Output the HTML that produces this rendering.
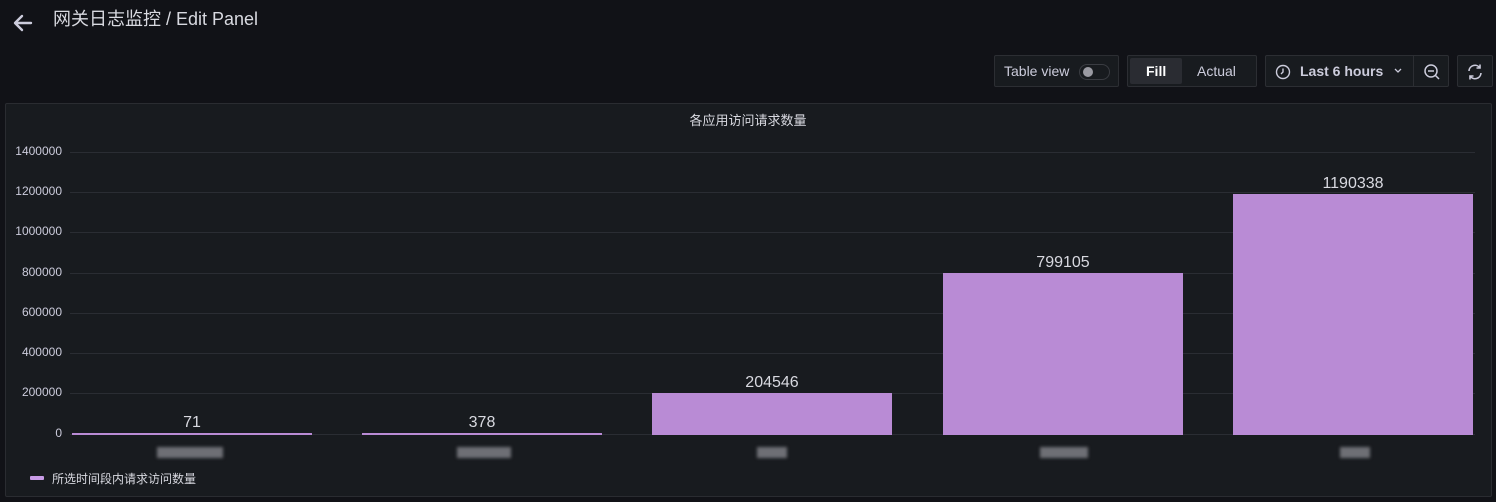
<!DOCTYPE html>
<html><head><meta charset="utf-8"><style>
*{margin:0;padding:0;box-sizing:border-box}
body{width:1496px;height:502px;background:#111217;font-family:"Liberation Sans","Noto Sans CJK SC",sans-serif;color:#ccccdc;position:relative;overflow:hidden}
.a{position:absolute}
.btn{position:absolute;border:1px solid #2c2e33;border-radius:2px;background:#181b1f;height:32px;top:55px;font-size:14px;color:#ccccdc}
.yl{position:absolute;right:1434px;font-size:12px;color:#ccccdc;text-align:right;width:60px}
.gl{position:absolute;left:70px;width:1405px;height:1px;background:#2a2d33}
.bar{position:absolute;background:#b98bd5;width:240px}
.v{position:absolute;width:240px;text-align:center;font-size:16px;color:#d8d9e0}
.blur{position:absolute;top:447px;height:11px;background:#6e6f75;filter:blur(1.5px)}
</style></head><body>
<svg class="a" style="left:12px;top:12px" width="22" height="22" viewBox="0 0 22 22"><path d="M19 11H4M10 4l-7 7 7 7" stroke="#ccccdc" stroke-width="2.4" fill="none" stroke-linecap="round" stroke-linejoin="round"/></svg>
<div class="a" style="left:53px;top:5px;font-size:18px;color:#d8d9e0">网关日志监控 / Edit Panel</div>

<div class="btn" style="left:994px;width:125px"><span class="a" style="left:9px;top:7px">Table view</span><div class="a" style="left:84px;top:8px;width:31px;height:16px;border:1px solid #3a3c42;border-radius:8px"><div class="a" style="left:3px;top:2px;width:10px;height:10px;border-radius:50%;background:#9a9aa2"></div></div></div>
<div class="btn" style="left:1127px;width:130px"><div class="a" style="left:2px;top:2px;width:52px;height:26px;background:#2a2c32;border-radius:2px"></div><span class="a" style="left:18px;top:7px;font-weight:bold;color:#fff">Fill</span><span class="a" style="left:69px;top:7px">Actual</span></div>
<div class="btn" style="left:1265px;width:184px">
<svg class="a" style="left:9px;top:8px" width="16" height="16" viewBox="0 0 16 16"><circle cx="8" cy="8" r="6.5" stroke="#ccccdc" stroke-width="1.4" fill="none"/><path d="M8 4.5V8L6 10" stroke="#ccccdc" stroke-width="1.4" fill="none"/></svg>
<span class="a" style="left:34px;top:7px;font-weight:bold">Last 6 hours</span>
<svg class="a" style="left:128px;top:12px" width="8" height="6"><path d="M1 1l3 3 3-3" stroke="#ccccdc" stroke-width="1.3" fill="none"/></svg>
<div class="a" style="left:147px;top:0;width:1px;height:30px;background:#2c2e33"></div>
<svg class="a" style="left:157px;top:7px" width="18" height="18" viewBox="0 0 18 18"><circle cx="8" cy="8" r="6" stroke="#ccccdc" stroke-width="1.5" fill="none"/><path d="M5 8h6M12.5 12.5L16 16" stroke="#ccccdc" stroke-width="1.5"/></svg>
</div>
<div class="btn" style="left:1457px;width:36px"><svg class="a" style="left:8px;top:7px" width="18" height="18" viewBox="0 0 18 18"><path d="M3 8a6 6 0 0 1 11-3M15 10a6 6 0 0 1-11 3" stroke="#ccccdc" stroke-width="1.6" fill="none"/><path d="M14 1.5V5h-3.5M4 16.5V13h3.5" stroke="#ccccdc" stroke-width="1.6" fill="none"/></svg></div>

<div class="a" style="left:5px;top:103px;width:1487px;height:394px;background:#181b1f;border:1px solid #2a2c31;border-radius:2px"></div>
<div class="a" style="left:0;width:1496px;top:110px;text-align:center;font-size:13px;color:#d8d9e0">各应用访问请求数量</div>

<div class="gl" style="top:152px"></div><div class="gl" style="top:192px"></div><div class="gl" style="top:232px"></div><div class="gl" style="top:273px"></div><div class="gl" style="top:313px"></div><div class="gl" style="top:353px"></div><div class="gl" style="top:393px"></div><div class="gl" style="top:434px"></div>
<div class="yl" style="top:144px">1400000</div><div class="yl" style="top:184px">1200000</div><div class="yl" style="top:224px">1000000</div><div class="yl" style="top:265px">800000</div><div class="yl" style="top:305px">600000</div><div class="yl" style="top:345px">400000</div><div class="yl" style="top:385px">200000</div><div class="yl" style="top:426px">0</div>

<div class="bar" style="left:72px;top:433px;height:2px"></div>
<div class="bar" style="left:362px;top:433px;height:2px"></div>
<div class="bar" style="left:652px;top:393px;height:42px"></div>
<div class="bar" style="left:943px;top:273px;height:162px"></div>
<div class="bar" style="left:1233px;top:194px;height:241px"></div>
<div class="v" style="left:72px;top:414px">71</div>
<div class="v" style="left:362px;top:414px">378</div>
<div class="v" style="left:652px;top:374px">204546</div>
<div class="v" style="left:943px;top:254px">799105</div>
<div class="v" style="left:1233px;top:175px">1190338</div>

<div class="blur" style="left:157px;width:66px"></div>
<div class="blur" style="left:457px;width:54px"></div>
<div class="blur" style="left:757px;width:30px"></div>
<div class="blur" style="left:1040px;width:48px"></div>
<div class="blur" style="left:1340px;width:30px"></div>

<div class="a" style="left:30px;top:476px;width:14px;height:4px;background:#c89be6;border-radius:1px"></div>
<div class="a" style="left:52px;top:470px;font-size:12px;color:#d8d9e0">所选时间段内请求访问数量</div>
</body></html>
